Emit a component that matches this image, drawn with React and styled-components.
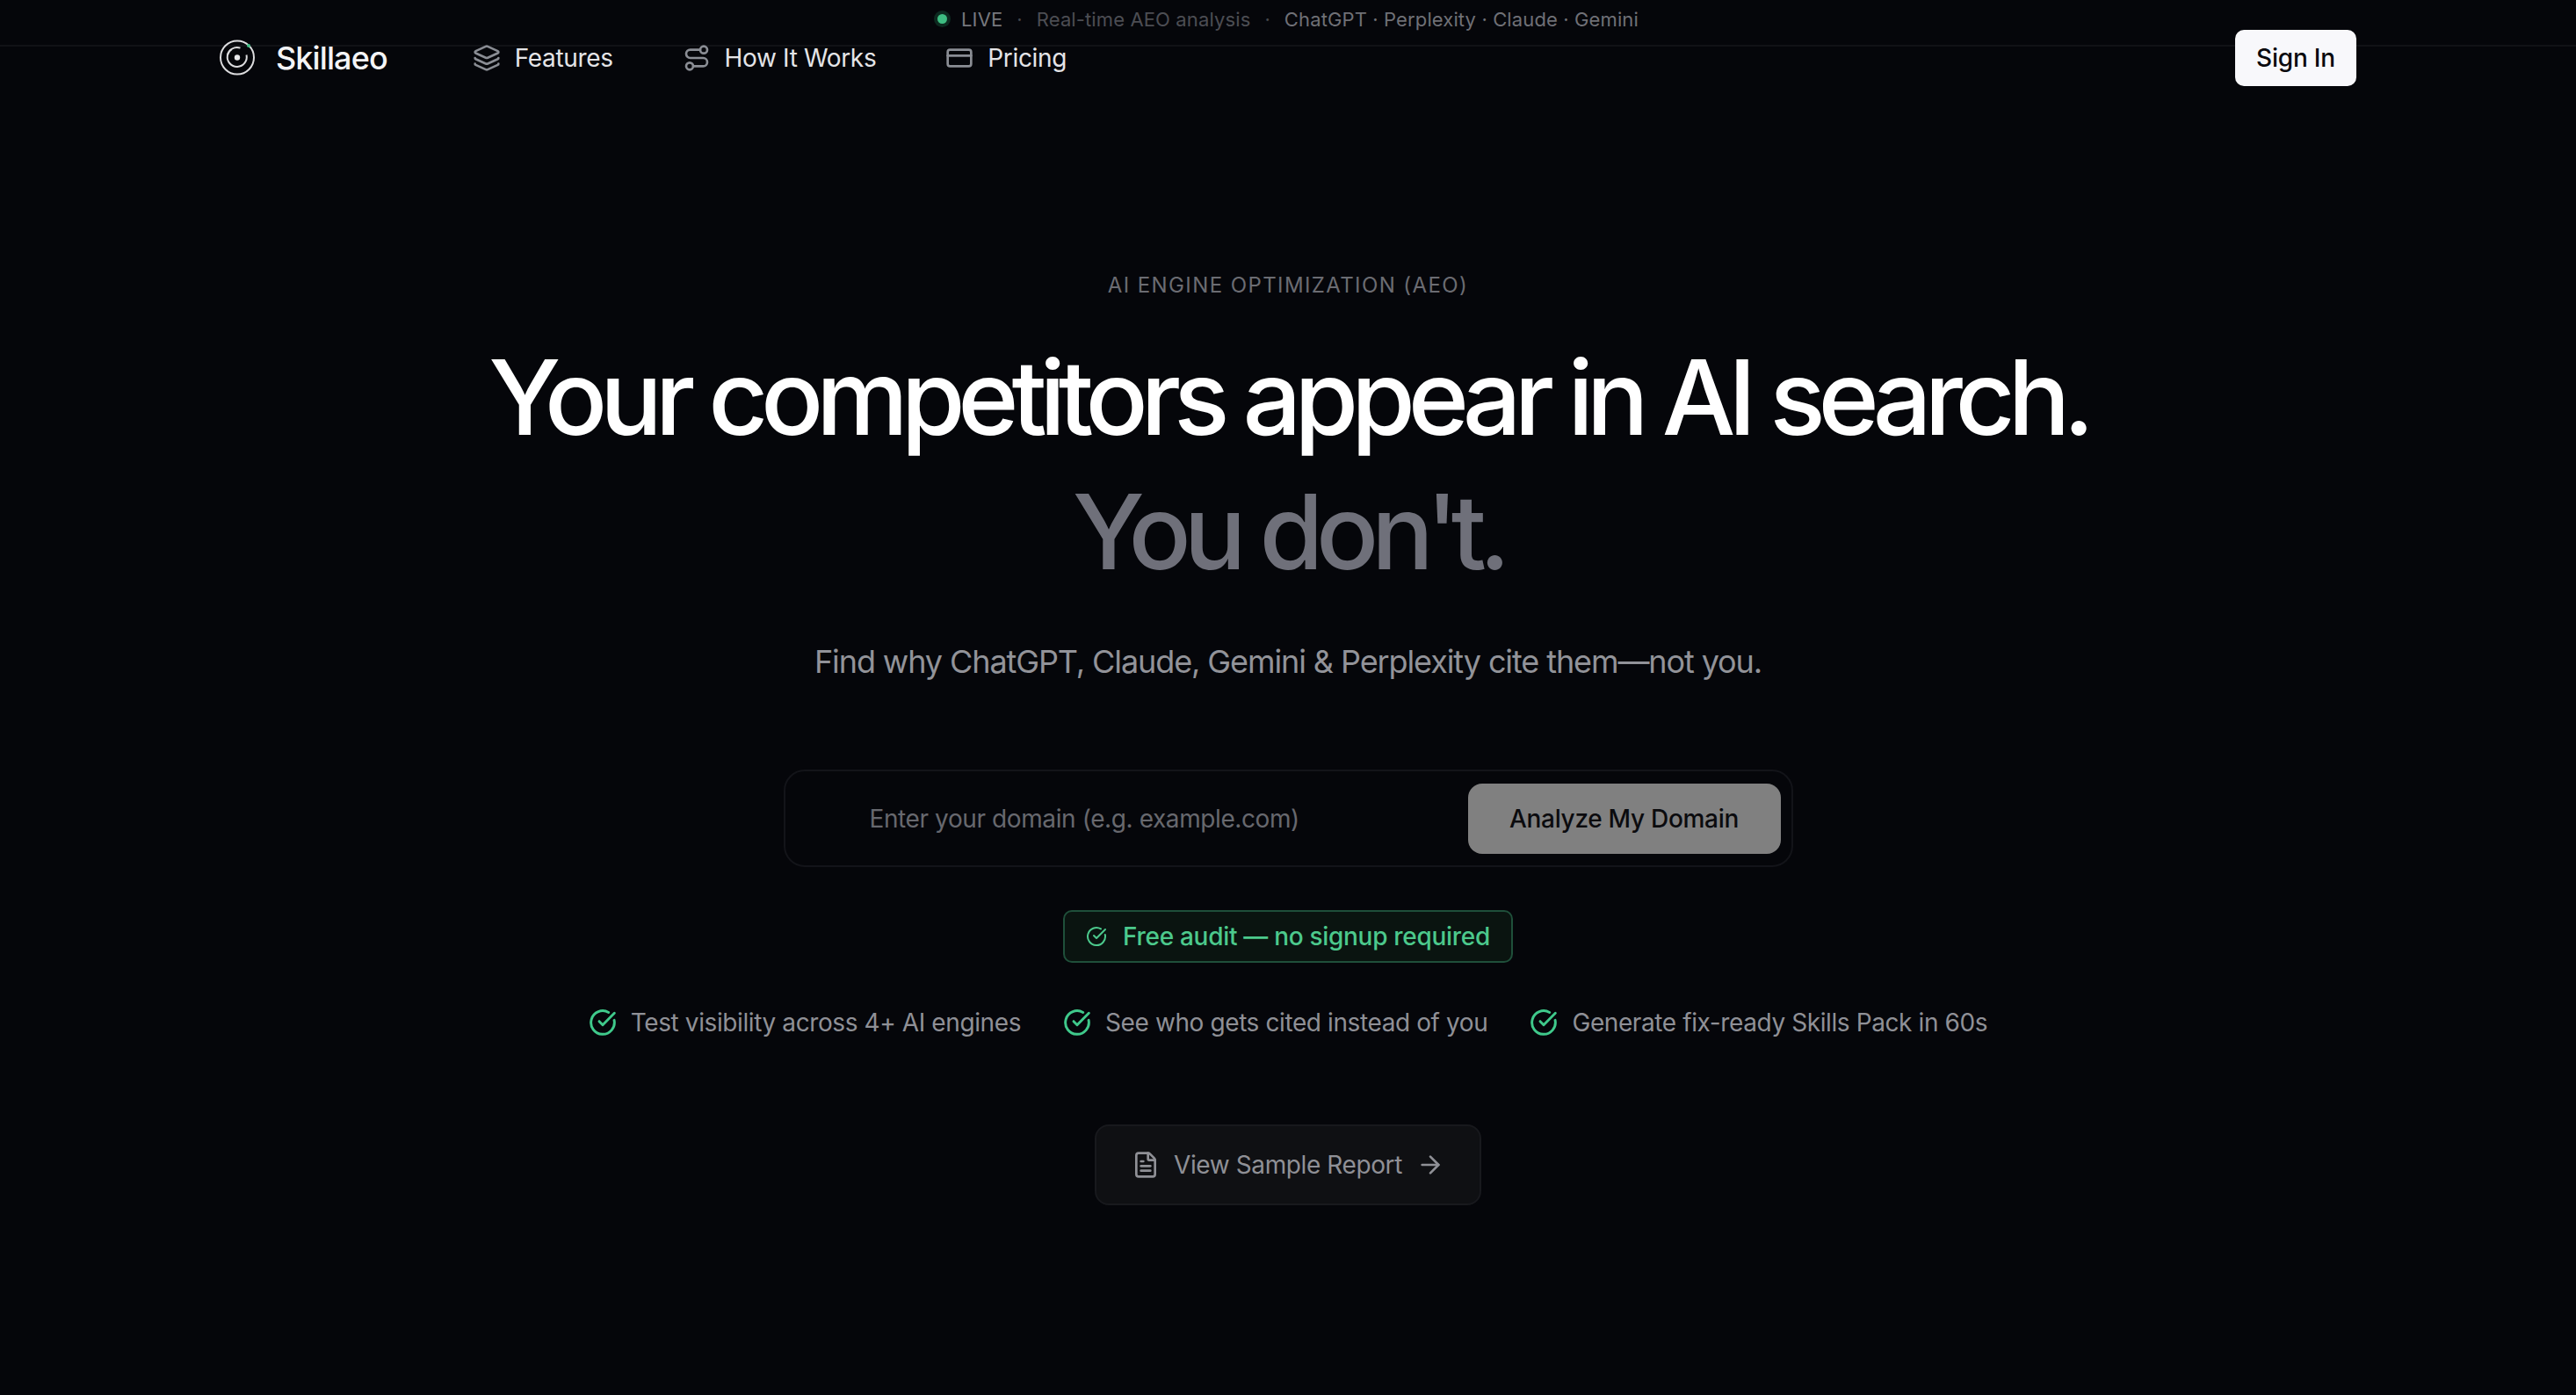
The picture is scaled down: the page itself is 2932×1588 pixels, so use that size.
import React from 'react'
import styled, { createGlobalStyle } from 'styled-components'
import { Layers, Route, CreditCard, CircleCheckBig, FileText, ArrowRight } from 'lucide-react'

const Global = createGlobalStyle`
  html, body {
    margin: 0;
    background: #05060a;
  }
  * {
    box-sizing: border-box;
  }
`

const Page = styled.div`
  position: relative;
  height: 1588px;
  font-family: Inter, 'Liberation Sans', sans-serif;
  background: #05060a;
  color: #fff;
  overflow: hidden;
`

const Ticker = styled.div`
  position: absolute;
  top: 0;
  left: 0;
  right: 0;
  height: 53px;
  padding-bottom: 8px;
  display: flex;
  align-items: center;
  justify-content: center;
  font-size: 22px;
  letter-spacing: 0.12px;
  color: #5c5d63;
  border-bottom: 2px solid #111216;
`

const LiveDot = styled.span`
  width: 11px;
  height: 11px;
  margin-right: 16px;
  border-radius: 50%;
  background: #3ebd82;
  box-shadow: 0 0 0 4px #0d2a20;
`

const Live = styled.span`
  color: #77787e;
`

const Sep = styled.span`
  margin: 0 16px;
  color: #46474c;
`

const Muted = styled.span`
  color: #4c4d53;
`

const Engines = styled.span`
  color: #6f7076;
`

const Nav = styled.nav`
  position: relative;
  display: flex;
  align-items: center;
  padding: 34px 250px 0;
  height: 98px;
`

const Logo = styled.div`
  display: flex;
  align-items: center;
  gap: 22px;
  font-size: 36px;
  font-weight: 500;
  letter-spacing: -0.9px;
  color: #f4f4f6;
`

const Links = styled.div`
  display: flex;
  align-items: center;
  gap: 79px;
  margin-left: 97px;
`

const NavLink = styled.a`
  display: flex;
  align-items: center;
  gap: 16px;
  font-size: 28px;
  letter-spacing: -0.35px;
  color: #e4e4e7;
  svg {
    color: #8a8d94;
  }
`

const SignIn = styled.button`
  margin-left: auto;
  width: 138px;
  height: 64px;
  border: 0;
  border-radius: 10px;
  background: #f8f8fb;
  color: #0a0a0e;
  font: 500 28px Inter, sans-serif;
  letter-spacing: -0.2px;
`

const Hero = styled.main`
  display: flex;
  flex-direction: column;
  align-items: center;
  padding-top: 213px;
`

const Eyebrow = styled.div`
  font-size: 24px;
  line-height: 28px;
  letter-spacing: 1.4px;
  color: #6b6c72;
`

const Title = styled.h1`
  margin: 37px 0 0;
  font-size: 118px;
  line-height: 153px;
  font-weight: 500;
  letter-spacing: -8.25px;
  text-align: center;
  color: #fff;
`

const Dim = styled.span`
  display: block;
  color: #6f707a;
`

const Subtitle = styled.p`
  margin: 46px 0 0;
  font-size: 36px;
  line-height: 50px;
  letter-spacing: -1.1px;
  color: #929399;
`

const DomainForm = styled.form`
  display: flex;
  align-items: center;
  justify-content: space-between;
  width: 1149px;
  height: 111px;
  margin-top: 98px;
  padding: 0 12px 0 96px;
  border: 2px solid #131419;
  border-radius: 24px;
`

const Placeholder = styled.span`
  font-size: 28px;
  letter-spacing: -0.4px;
  color: #67686e;
`

const Analyze = styled.button`
  width: 356px;
  height: 80px;
  border: 0;
  border-radius: 16px;
  background: #808080;
  color: #0b0b0e;
  font: 500 28px Inter, sans-serif;
  letter-spacing: -0.3px;
`

const Badge = styled.div`
  display: flex;
  align-items: center;
  gap: 18px;
  height: 60px;
  margin-top: 49px;
  padding: 0 24px 0 24px;
  border: 2px solid #1f4f3a;
  border-radius: 10px;
  background: #0a1410;
  color: #4cc98c;
  font-size: 28px;
  font-weight: 500;
  letter-spacing: -0.3px;
`

const Checks = styled.div`
  display: flex;
  align-items: center;
  gap: 48px;
  margin-top: 50px;
`

const CheckItem = styled.div`
  display: flex;
  align-items: center;
  gap: 16px;
  font-size: 28px;
  line-height: 36px;
  letter-spacing: -0.4px;
  color: #8f9096;
  svg {
    color: #3fc98b;
  }
`

const ReportBtn = styled.button`
  display: flex;
  align-items: center;
  justify-content: center;
  gap: 16px;
  width: 440px;
  height: 92px;
  margin-top: 98px;
  border: 2px solid #18191d;
  border-radius: 16px;
  background: #0f1013;
  color: #8f9096;
  font: 400 28px Inter, sans-serif;
  letter-spacing: -0.4px;
`

function LogoMark() {
  return (
    <svg width="42" height="42" viewBox="0 0 42 42" fill="none" stroke="#dcdcde" strokeWidth="2">
      <circle cx="20" cy="20.5" r="19" />
      <path d="M30.5 17.5a11 11 0 1 1-7-7.9" />
      <path d="M9 17.5a11 11 0 0 1 5-6.5" />
      <circle cx="20" cy="20.5" r="3.2" fill="#e8e8ea" stroke="none" />
      <circle cx="33" cy="7" r="2" fill="#3ebd82" stroke="none" />
    </svg>
  )
}

function App() {
  return (
    <Page>
      <Global />
      <Ticker>
        <LiveDot />
        <Live>LIVE</Live>
        <Sep>·</Sep>
        <Muted>Real-time AEO analysis</Muted>
        <Sep>·</Sep>
        <Engines>ChatGPT · Perplexity · Claude · Gemini</Engines>
      </Ticker>
      <Nav>
        <Logo>
          <LogoMark />
          Skillaeo
        </Logo>
        <Links>
          <NavLink>
            <Layers size={32} strokeWidth={2} />
            Features
          </NavLink>
          <NavLink>
            <Route size={32} strokeWidth={2} />
            How It Works
          </NavLink>
          <NavLink>
            <CreditCard size={32} strokeWidth={2} />
            Pricing
          </NavLink>
        </Links>
        <SignIn>Sign In</SignIn>
      </Nav>
      <Hero>
        <Eyebrow>AI ENGINE OPTIMIZATION (AEO)</Eyebrow>
        <Title>
          Your competitors appear in AI search.
          <Dim>You don't.</Dim>
        </Title>
        <Subtitle>Find why ChatGPT, Claude, Gemini &amp; Perplexity cite them—not you.</Subtitle>
        <DomainForm>
          <Placeholder>Enter your domain (e.g. example.com)</Placeholder>
          <Analyze type="button">Analyze My Domain</Analyze>
        </DomainForm>
        <Badge>
          <CircleCheckBig size={24} strokeWidth={2} />
          Free audit — no signup required
        </Badge>
        <Checks>
          <CheckItem>
            <CircleCheckBig size={32} strokeWidth={2.2} />
            Test visibility across 4+ AI engines
          </CheckItem>
          <CheckItem>
            <CircleCheckBig size={32} strokeWidth={2.2} />
            See who gets cited instead of you
          </CheckItem>
          <CheckItem>
            <CircleCheckBig size={32} strokeWidth={2.2} />
            Generate fix-ready Skills Pack in 60s
          </CheckItem>
        </Checks>
        <ReportBtn type="button">
          <FileText size={32} strokeWidth={2} />
          View Sample Report
          <ArrowRight size={32} strokeWidth={2} />
        </ReportBtn>
      </Hero>
    </Page>
  )
}

export default App
